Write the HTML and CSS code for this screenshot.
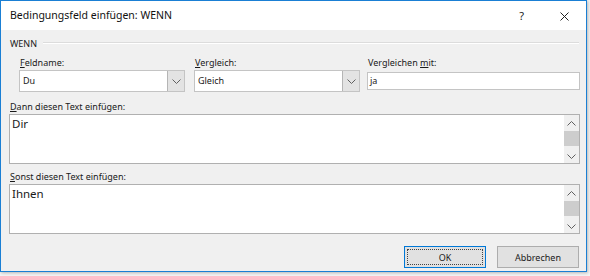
FILE: index.html
```html
<!DOCTYPE html>
<html>
<head>
<meta charset="utf-8">
<link rel="stylesheet" href="styles.css">
</head>
<body>
<div class="window">
  <div class="titlebar">
    <span class="title">Bedingungsfeld einfügen: WENN</span>
    <span class="help">?</span>
    <svg class="close" width="9" height="9" viewBox="0 0 9 9"><path d="M0.5 0.5 L8.5 8.5 M8.5 0.5 L0.5 8.5" stroke="#222" stroke-width="1" fill="none"/></svg>
  </div>
  <div class="content">
    <div class="group-head"><span>WENN</span><div class="rule"></div></div>
    <div class="fields">
      <div class="field">
        <label class="lbl"><u>F</u>eldname:</label>
        <div class="combo"><span class="val">Du</span><span class="drop"><svg width="9" height="5" viewBox="0 0 9 5"><path d="M0.5 0.5 L4.5 4.5 L8.5 0.5" stroke="#606060" fill="none"/></svg></span></div>
      </div>
      <div class="field">
        <label class="lbl"><u>V</u>ergleich:</label>
        <div class="combo"><span class="val">Gleich</span><span class="drop"><svg width="9" height="5" viewBox="0 0 9 5"><path d="M0.5 0.5 L4.5 4.5 L8.5 0.5" stroke="#606060" fill="none"/></svg></span></div>
      </div>
      <div class="field">
        <label class="lbl">Vergleichen <u>m</u>it:</label>
        <div class="textbox">ja</div>
      </div>
    </div>
    <label class="lbl block first"><u>D</u>ann diesen Text einfügen:</label>
    <div class="area">
      <div class="area-text">Dir</div>
      <div class="scroll">
        <svg width="9" height="5" viewBox="0 0 9 5"><path d="M0.5 4.5 L4.5 0.5 L8.5 4.5" stroke="#606060" fill="none"/></svg>
        <div class="thumb"></div>
        <svg width="9" height="5" viewBox="0 0 9 5"><path d="M0.5 0.5 L4.5 4.5 L8.5 0.5" stroke="#606060" fill="none"/></svg>
      </div>
    </div>
    <label class="lbl block second"><u>S</u>onst diesen Text einfügen:</label>
    <div class="area">
      <div class="area-text">Ihnen</div>
      <div class="scroll">
        <svg width="9" height="5" viewBox="0 0 9 5"><path d="M0.5 4.5 L4.5 0.5 L8.5 4.5" stroke="#606060" fill="none"/></svg>
        <div class="thumb"></div>
        <svg width="9" height="5" viewBox="0 0 9 5"><path d="M0.5 0.5 L4.5 4.5 L8.5 0.5" stroke="#606060" fill="none"/></svg>
      </div>
    </div>
    <div class="buttons">
      <button class="btn default"><span class="focus">OK</span></button>
      <button class="btn">Abbrechen</button>
    </div>
  </div>
</div>
</body>
</html>
```
FILE: styles.css
```css
html, body {
  margin: 0;
  padding: 0;
}
body {
  width: 590px;
  height: 276px;
  background: #f4f4f4;
  font-family: "Noto Sans", "Open Sans", sans-serif;
  font-size: 9px;
  color: #1a1a1a;
  overflow: hidden;
}
.window {
  width: 585px;
  height: 270px;
  border: 1px solid #1a7fd4;
  background: #f0f0f0;
  box-shadow: 1px 1px 3px rgba(0,0,0,0.25);
  display: flex;
  flex-direction: column;
}
.titlebar {
  height: 29px;
  background: #fff;
  display: flex;
  align-items: center;
  padding-left: 9px;
}
.title {
  font-size: 10.5px;
  color: #111;
  flex: 1;
  margin-top: -1px;
}
.help {
  font-size: 11px;
  margin-right: 36px;
  margin-top: -1px;
}
.close {
  margin-right: 17px;
  margin-top: 1px;
}
.content {
  padding: 0 6px 0 8px;
  display: flex;
  flex-direction: column;
}
.group-head {
  display: flex;
  align-items: center;
  height: 14px;
  margin-top: 6px;
  padding-left: 1px;
}
.group-head span {
  margin-right: 6px;
}
.rule {
  flex: 1;
  height: 1px;
  background: #dcdcdc;
  border-bottom: 1px solid #fff;
  margin-right: 1px;
}
.fields {
  display: grid;
  grid-template-columns: 175px 173px 213px;
  padding-left: 10px;
  margin-top: 6px;
}
.field:first-child .combo,
.field:nth-child(2) .combo {
  width: 166px;
}
.lbl {
  display: block;
  height: 14px;
  line-height: 14px;
  padding-left: 1px;
}
.combo {
  height: 22px;
  box-sizing: border-box;
  border: 1px solid #c4c4c4;
  background: #fff;
  display: flex;
  align-items: stretch;
}
.combo .val {
  flex: 1;
  padding-left: 3px;
  line-height: 20px;
}
.drop {
  width: 16px;
  background: #e3e3e3;
  border-left: 1px solid #b5b5b5;
  display: flex;
  align-items: center;
  justify-content: center;
}
.textbox {
  margin-top: 2px;
  height: 18px;
  box-sizing: border-box;
  line-height: 16px;
  border: 1px solid #c4c4c4;
  background: #fff;
  padding-left: 2px;
}
.block.first {
  margin-top: 8px;
}
.block.second {
  margin-top: 6px;
}
.area {
  height: 50px;
  box-sizing: border-box;
  border: 1px solid #b0b0b0;
  background: #fff;
  display: flex;
}
.area-text {
  flex: 1;
  font-size: 11.5px;
  padding: 1px 0 0 2px;
  line-height: 15px;
}
.scroll {
  width: 15px;
  background: #f0f0f0;
  display: flex;
  flex-direction: column;
  align-items: center;
  padding-top: 6px;
}
.thumb {
  width: 15px;
  height: 15px;
  background: #cdcdcd;
  margin: 5px 0 8px;
}
.buttons {
  display: flex;
  justify-content: flex-end;
  gap: 11px;
  margin-top: 12px;
  padding-right: 1px;
}
.btn {
  width: 82px;
  height: 22px;
  font-family: inherit;
  font-size: 9px;
  color: #1a1a1a;
  background: #e1e1e1;
  border: 1px solid #adadad;
  padding: 0;
  margin: 0;
}
.btn.default {
  border: 1px solid #0078d7;
  padding: 2px;
}
.focus {
  display: flex;
  align-items: center;
  justify-content: center;
  height: 100%;
  border: 1px dotted #444;
  box-sizing: border-box;
}
u {
  text-decoration: underline;
  text-underline-offset: 1px;
}
```
